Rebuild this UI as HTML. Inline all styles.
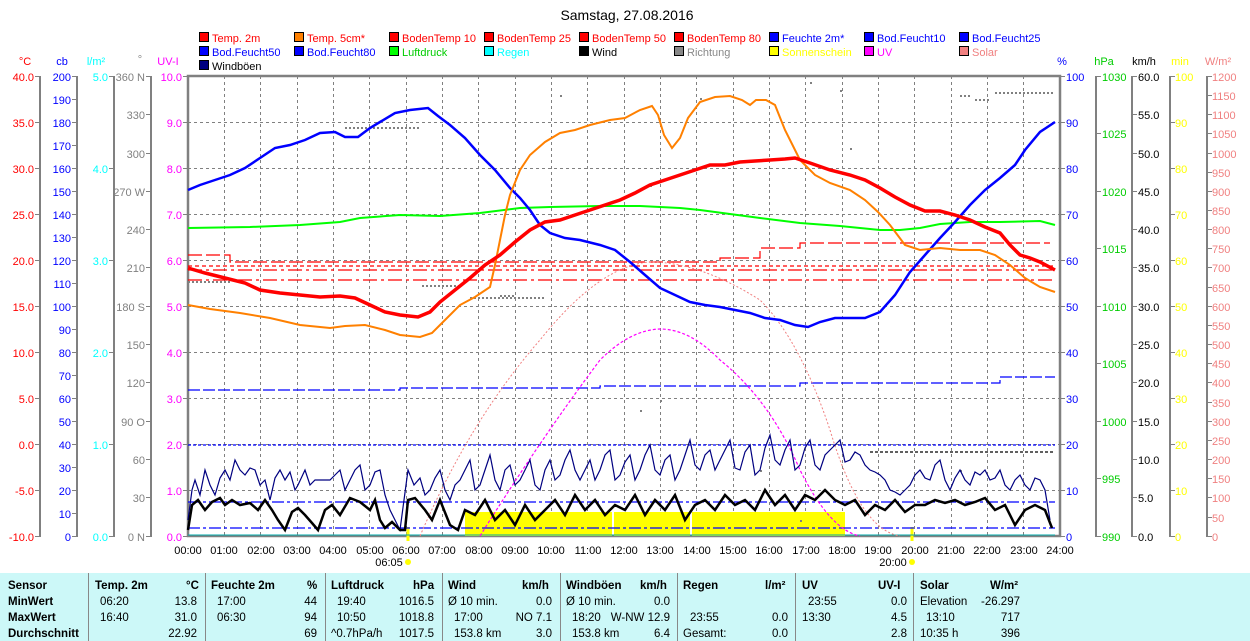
<!DOCTYPE html>
<html><head><meta charset="utf-8"><style>
body{margin:0;background:#fff;width:1250px;height:641px;overflow:hidden;font-family:"Liberation Sans",sans-serif}
svg{position:absolute;left:0;top:0}
text{font-family:"Liberation Sans",sans-serif;font-size:11px}
.tb{position:absolute;left:0;top:573px;width:1250px;height:68px;background:#ccf8f8;font-size:11.5px}
.tb div{position:absolute;white-space:nowrap}
.b{font-weight:bold}
.sep{position:absolute;top:0;width:1px;height:68px;background:#888}
</style></head><body>
<svg width="1250" height="641" viewBox="0 0 1250 641">
<text x="627" y="20" text-anchor="middle" style="font-size:14px">Samstag, 27.08.2016</text>
<g stroke="#000" stroke-width="1">
<rect x="199.5" y="32.5" width="9" height="9" fill="#f00"/><rect x="294.5" y="32.5" width="9" height="9" fill="#ff8000"/><rect x="389.5" y="32.5" width="9" height="9" fill="#f00"/><rect x="484.5" y="32.5" width="9" height="9" fill="#f00"/><rect x="579.5" y="32.5" width="9" height="9" fill="#f00"/><rect x="674.5" y="32.5" width="9" height="9" fill="#f00"/><rect x="769.5" y="32.5" width="9" height="9" fill="#00f"/><rect x="864.5" y="32.5" width="9" height="9" fill="#00f"/><rect x="959.5" y="32.5" width="9" height="9" fill="#00f"/>
<rect x="199.5" y="46.5" width="9" height="9" fill="#00f"/><rect x="294.5" y="46.5" width="9" height="9" fill="#00f"/><rect x="389.5" y="46.5" width="9" height="9" fill="#0f0"/><rect x="484.5" y="46.5" width="9" height="9" fill="#0ff"/><rect x="579.5" y="46.5" width="9" height="9" fill="#000"/><rect x="674.5" y="46.5" width="9" height="9" fill="#888"/><rect x="769.5" y="46.5" width="9" height="9" fill="#ff0"/><rect x="864.5" y="46.5" width="9" height="9" fill="#f0f"/><rect x="959.5" y="46.5" width="9" height="9" fill="#f08080"/>
<rect x="199.5" y="60.5" width="9" height="9" fill="#000080"/>
</g>
<g>
<text x="212" y="42" fill="#f00">Temp. 2m</text><text x="307" y="42" fill="#f00">Temp. 5cm*</text><text x="402" y="42" fill="#f00">BodenTemp 10</text><text x="497" y="42" fill="#f00">BodenTemp 25</text><text x="592" y="42" fill="#f00">BodenTemp 50</text><text x="687" y="42" fill="#f00">BodenTemp 80</text><text x="782" y="42" fill="#00f">Feuchte 2m*</text><text x="877" y="42" fill="#00f">Bod.Feucht10</text><text x="972" y="42" fill="#00f">Bod.Feucht25</text>
<text x="212" y="56" fill="#00f">Bod.Feucht50</text><text x="307" y="56" fill="#00f">Bod.Feucht80</text><text x="402" y="56" fill="#0c0">Luftdruck</text><text x="497" y="56" fill="#0ff">Regen</text><text x="592" y="56" fill="#000">Wind</text><text x="687" y="56" fill="#888">Richtung</text><text x="782" y="56" fill="#ff0">Sonnenschein</text><text x="877" y="56" fill="#f0f">UV</text><text x="972" y="56" fill="#f08080">Solar</text>
<text x="212" y="70" fill="#000">Windböen</text>
</g>
<text x="25" y="65" fill="#f00" text-anchor="middle">°C</text><text x="62" y="65" fill="#00f" text-anchor="middle">cb</text><text x="96" y="65" fill="#0ff" text-anchor="middle">l/m²</text><text x="140" y="63" fill="#888" text-anchor="middle">°</text><text x="168" y="65" fill="#f0f" text-anchor="middle">UV-I</text>
<text x="1062" y="65" fill="#00f" text-anchor="middle">%</text><text x="1104" y="65" fill="#0c0" text-anchor="middle">hPa</text><text x="1144" y="65" fill="#000" text-anchor="middle">km/h</text><text x="1180" y="65" fill="#ff0" text-anchor="middle">min</text><text x="1218" y="65" fill="#f08080" text-anchor="middle">W/m²</text>
<g stroke="#808080" stroke-dasharray="3,3" stroke-width="1">
<path d="M224.5 76V536M260.5 76V536M297.5 76V536M333.5 76V536M369.5 76V536M406.5 76V536M442.5 76V536M478.5 76V536M515.5 76V536M551.5 76V536M587.5 76V536M624.5 76V536M660.5 76V536M696.5 76V536M733.5 76V536M769.5 76V536M805.5 76V536M842.5 76V536M878.5 76V536M914.5 76V536M951.5 76V536M987.5 76V536M1023.5 76V536"/>
<path d="M188 122.5H1060M188 168.5H1060M188 214.5H1060M188 260.5H1060M188 306.5H1060M188 352.5H1060M188 398.5H1060M188 444.5H1060M188 490.5H1060"/>
</g>
<g stroke="#808080" stroke-width="2" fill="none">
<path d="M40 76V537M77 76V537M114 76V537M151 76V537M1096 76V537M1132 76V537M1170 76V537M1207 76V537"/>
<rect x="188" y="76" width="872" height="460" stroke-width="2.5"/>
</g>
<g stroke="#808080" stroke-width="1">
<path d="M35 76.5h5M35 122.5h5M35 168.5h5M35 214.5h5M35 260.5h5M35 306.5h5M35 352.5h5M35 398.5h5M35 444.5h5M35 490.5h5M35 536.5h5"/>
<path d="M72 76.5h5M72 99.5h5M72 122.5h5M72 145.5h5M72 168.5h5M72 191.5h5M72 214.5h5M72 237.5h5M72 260.5h5M72 283.5h5M72 306.5h5M72 329.5h5M72 352.5h5M72 375.5h5M72 398.5h5M72 421.5h5M72 444.5h5M72 467.5h5M72 490.5h5M72 513.5h5M72 536.5h5"/>
<path d="M109 76.5h5M109 168.5h5M109 260.5h5M109 352.5h5M109 444.5h5M109 536.5h5"/>
<path d="M146 76.5h5M146 114.5h5M146 153.5h5M146 191.5h5M146 229.5h5M146 267.5h5M146 306.5h5M146 344.5h5M146 382.5h5M146 421.5h5M146 459.5h5M146 497.5h5M146 536.5h5"/>
<path d="M183 76.5h5M183 122.5h5M183 168.5h5M183 214.5h5M183 260.5h5M183 306.5h5M183 352.5h5M183 398.5h5M183 444.5h5M183 490.5h5M183 536.5h5"/>
<path d="M1060 76.5h5M1060 122.5h5M1060 168.5h5M1060 214.5h5M1060 260.5h5M1060 306.5h5M1060 352.5h5M1060 398.5h5M1060 444.5h5M1060 490.5h5M1060 536.5h5"/>
<path d="M1096 76.5h5M1096 133.5h5M1096 191.5h5M1096 248.5h5M1096 306.5h5M1096 363.5h5M1096 421.5h5M1096 478.5h5M1096 536.5h5"/>
<path d="M1132 76.5h5M1132 114.5h5M1132 153.5h5M1132 191.5h5M1132 229.5h5M1132 267.5h5M1132 306.5h5M1132 344.5h5M1132 382.5h5M1132 421.5h5M1132 459.5h5M1132 497.5h5M1132 536.5h5"/>
<path d="M1170 76.5h5M1170 122.5h5M1170 168.5h5M1170 214.5h5M1170 260.5h5M1170 306.5h5M1170 352.5h5M1170 398.5h5M1170 444.5h5M1170 490.5h5M1170 536.5h5"/>
<path d="M1207 76.5h5M1207 95.5h5M1207 114.5h5M1207 133.5h5M1207 153.5h5M1207 172.5h5M1207 191.5h5M1207 210.5h5M1207 229.5h5M1207 248.5h5M1207 267.5h5M1207 287.5h5M1207 306.5h5M1207 325.5h5M1207 344.5h5M1207 363.5h5M1207 382.5h5M1207 402.5h5M1207 421.5h5M1207 440.5h5M1207 459.5h5M1207 478.5h5M1207 497.5h5M1207 517.5h5M1207 536.5h5"/>
</g>
<g fill="#f00" text-anchor="end"><text x="34" y="81">40.0</text><text x="34" y="127">35.0</text><text x="34" y="173">30.0</text><text x="34" y="219">25.0</text><text x="34" y="265">20.0</text><text x="34" y="311">15.0</text><text x="34" y="357">10.0</text><text x="34" y="403">5.0</text><text x="34" y="449">0.0</text><text x="34" y="495">-5.0</text><text x="34" y="541">-10.0</text></g>
<g fill="#00f" text-anchor="end"><text x="71" y="81">200</text><text x="71" y="104">190</text><text x="71" y="127">180</text><text x="71" y="150">170</text><text x="71" y="173">160</text><text x="71" y="196">150</text><text x="71" y="219">140</text><text x="71" y="242">130</text><text x="71" y="265">120</text><text x="71" y="288">110</text><text x="71" y="311">100</text><text x="71" y="334">90</text><text x="71" y="357">80</text><text x="71" y="380">70</text><text x="71" y="403">60</text><text x="71" y="426">50</text><text x="71" y="449">40</text><text x="71" y="472">30</text><text x="71" y="495">20</text><text x="71" y="518">10</text><text x="71" y="541">0</text></g>
<g fill="#0ff" text-anchor="end"><text x="108" y="81">5.0</text><text x="108" y="173">4.0</text><text x="108" y="265">3.0</text><text x="108" y="357">2.0</text><text x="108" y="449">1.0</text><text x="108" y="541">0.0</text></g>
<g fill="#808080" text-anchor="end"><text x="145" y="81">360 N</text><text x="145" y="119">330</text><text x="145" y="158">300</text><text x="145" y="196">270 W</text><text x="145" y="234">240</text><text x="145" y="272">210</text><text x="145" y="311">180 S</text><text x="145" y="349">150</text><text x="145" y="387">120</text><text x="145" y="426">90 O</text><text x="145" y="464">60</text><text x="145" y="502">30</text><text x="145" y="541">0 N</text></g>
<g fill="#f0f" text-anchor="end"><text x="182" y="81">10.0</text><text x="182" y="127">9.0</text><text x="182" y="173">8.0</text><text x="182" y="219">7.0</text><text x="182" y="265">6.0</text><text x="182" y="311">5.0</text><text x="182" y="357">4.0</text><text x="182" y="403">3.0</text><text x="182" y="449">2.0</text><text x="182" y="495">1.0</text><text x="182" y="541">0.0</text></g>
<g fill="#00f"><text x="1066" y="81">100</text><text x="1066" y="127">90</text><text x="1066" y="173">80</text><text x="1066" y="219">70</text><text x="1066" y="265">60</text><text x="1066" y="311">50</text><text x="1066" y="357">40</text><text x="1066" y="403">30</text><text x="1066" y="449">20</text><text x="1066" y="495">10</text><text x="1066" y="541">0</text></g>
<g fill="#0c0"><text x="1102" y="81">1030</text><text x="1102" y="138">1025</text><text x="1102" y="196">1020</text><text x="1102" y="253">1015</text><text x="1102" y="311">1010</text><text x="1102" y="368">1005</text><text x="1102" y="426">1000</text><text x="1102" y="483">995</text><text x="1102" y="541">990</text></g>
<g fill="#000"><text x="1138" y="81">60.0</text><text x="1138" y="119">55.0</text><text x="1138" y="158">50.0</text><text x="1138" y="196">45.0</text><text x="1138" y="234">40.0</text><text x="1138" y="272">35.0</text><text x="1138" y="311">30.0</text><text x="1138" y="349">25.0</text><text x="1138" y="387">20.0</text><text x="1138" y="426">15.0</text><text x="1138" y="464">10.0</text><text x="1138" y="502">5.0</text><text x="1138" y="541">0.0</text></g>
<g fill="#ff0"><text x="1175" y="81">100</text><text x="1175" y="127">90</text><text x="1175" y="173">80</text><text x="1175" y="219">70</text><text x="1175" y="265">60</text><text x="1175" y="311">50</text><text x="1175" y="357">40</text><text x="1175" y="403">30</text><text x="1175" y="449">20</text><text x="1175" y="495">10</text><text x="1175" y="541">0</text></g>
<g fill="#f08080"><text x="1212" y="81">1200</text><text x="1212" y="100">1150</text><text x="1212" y="119">1100</text><text x="1212" y="138">1050</text><text x="1212" y="158">1000</text><text x="1212" y="177">950</text><text x="1212" y="196">900</text><text x="1212" y="215">850</text><text x="1212" y="234">800</text><text x="1212" y="253">750</text><text x="1212" y="272">700</text><text x="1212" y="292">650</text><text x="1212" y="311">600</text><text x="1212" y="330">550</text><text x="1212" y="349">500</text><text x="1212" y="368">450</text><text x="1212" y="387">400</text><text x="1212" y="407">350</text><text x="1212" y="426">300</text><text x="1212" y="445">250</text><text x="1212" y="464">200</text><text x="1212" y="483">150</text><text x="1212" y="502">100</text><text x="1212" y="522">50</text><text x="1212" y="541">0</text></g>
<g text-anchor="middle" fill="#000"><text x="188" y="554">00:00</text><text x="224" y="554">01:00</text><text x="261" y="554">02:00</text><text x="297" y="554">03:00</text><text x="333" y="554">04:00</text><text x="370" y="554">05:00</text><text x="406" y="554">06:00</text><text x="442" y="554">07:00</text><text x="479" y="554">08:00</text><text x="515" y="554">09:00</text><text x="551" y="554">10:00</text><text x="588" y="554">11:00</text><text x="624" y="554">12:00</text><text x="660" y="554">13:00</text><text x="697" y="554">14:00</text><text x="733" y="554">15:00</text><text x="769" y="554">16:00</text><text x="806" y="554">17:00</text><text x="842" y="554">18:00</text><text x="878" y="554">19:00</text><text x="915" y="554">20:00</text><text x="951" y="554">21:00</text><text x="987" y="554">22:00</text><text x="1024" y="554">23:00</text><text x="1060" y="554">24:00</text>
<text x="389" y="566">06:05</text><text x="893" y="566">20:00</text></g>
<circle cx="408" cy="562" r="3" fill="#ff0"/><circle cx="912" cy="562" r="3" fill="#ff0"/>
<path d="M408 527V541M912 527V541" stroke="#ff0" stroke-width="3"/>
<path d="M465 512H612V536H465Z M614 512H690V536H614Z M692 512H845V536H692Z" fill="#ff0"/>
<g fill="none" stroke-width="1.2">
<path d="M188 390H400V388H600V386H800V383H1000V377H1055" stroke="#00f" stroke-dasharray="12,3"/>
<path d="M188 445H1055" stroke="#00f" stroke-dasharray="3,2"/>
<path d="M870 452H1055" stroke="#000" stroke-dasharray="3,2"/>
<path d="M188 502H1055" stroke="#00f" stroke-dasharray="12,3,3,3"/>
<path d="M188 528H1055" stroke="#00f" stroke-dasharray="12,3,3,3"/>
<path d="M188 255H230V262H720V258H760V248H800V243H1050" stroke="#f00" stroke-dasharray="14,4"/>
<path d="M188 266H1055" stroke="#f00" stroke-dasharray="4,3"/>
<path d="M188 270H1055" stroke="#f00" stroke-dasharray="14,4,3,4"/>
<path d="M188 280H1055" stroke="#f00" stroke-dasharray="14,4,3,4"/>
<path d="M188 535H1055" stroke="#0aa" stroke-width="1"/>
</g>
<g fill="none" stroke="#808080" stroke-width="2" stroke-dasharray="2,2">
<path d="M188 282H232M345 128H420M422 286H462M470 298H545M500 296H515M995 93H1055M960 96H970M975 100H990"/>
</g>
<g fill="#808080"><rect x="560" y="95" width="2" height="2"/><rect x="700" y="98" width="2" height="2"/><rect x="810" y="82" width="2" height="2"/><rect x="840" y="90" width="2" height="2"/><rect x="850" y="148" width="2" height="2"/><rect x="640" y="410" width="2" height="2"/><rect x="660" y="400" width="2" height="2"/><rect x="760" y="470" width="2" height="2"/><rect x="800" y="520" width="2" height="2"/><rect x="960" y="470" width="2" height="2"/><rect x="650" y="185" width="2" height="2"/></g>
<path d="M420 536 Q470 420 540 340 Q600 265 650 262 Q700 262 760 300 Q800 340 830 430 Q860 530 900 536" fill="none" stroke="#f08080" stroke-width="1" stroke-dasharray="2,2"/>
<path d="M480 536 Q540 440 600 360 Q630 330 660 329 Q690 329 720 360 Q770 400 800 470 Q830 530 860 536" fill="none" stroke="#f0f" stroke-width="1.2" stroke-dasharray="3,2"/>
<polyline fill="none" stroke="#0f0" stroke-width="2" points="188,228 250,227 300,225 340,222 360,218 400,215 440,216 480,213 520,208 550,207 600,206 640,206 680,208 700,210 730,214 760,218 800,223 840,226 880,230 900,230 920,228 940,224 970,222 1000,222 1040,221 1055,225"/>
<polyline fill="none" stroke="#00f" stroke-width="2.5" points="188,190 200,185 215,180 230,175 245,168 260,158 275,148 290,145 305,140 320,133 335,132 345,137 358,137 370,128 380,122 395,113 410,110 428,108 438,116 450,125 465,138 480,155 495,170 510,188 520,198 530,210 540,225 550,233 565,238 580,240 600,245 615,250 630,262 645,275 660,288 675,295 690,302 705,305 720,307 735,310 750,313 765,318 780,320 795,325 808,327 820,322 835,318 850,318 865,318 880,312 895,295 910,272 925,255 940,238 955,222 970,205 985,190 1000,178 1015,165 1025,150 1040,132 1055,122"/>
<polyline fill="none" stroke="#ff8000" stroke-width="2" points="188,305 210,309 240,313 270,318 300,325 330,328 345,326 365,325 385,330 400,335 420,337 432,333 445,320 460,305 475,297 490,287 495,265 500,240 505,215 510,195 520,170 530,155 545,142 560,133 575,130 590,125 610,120 625,118 640,110 652,106 658,115 664,135 672,148 680,138 688,118 700,102 715,97 730,96 742,100 750,105 756,100 766,100 775,105 785,130 800,160 815,175 830,183 850,190 865,200 878,212 890,225 905,245 920,250 940,248 960,250 980,250 995,255 1010,265 1025,278 1040,287 1055,292"/>
<polyline fill="none" stroke="#f00" stroke-width="3.5" points="188,268 205,273 225,278 245,283 260,290 280,293 300,295 320,297 340,296 355,298 370,305 385,312 400,315 418,317 430,312 440,302 455,290 470,278 485,265 500,255 515,242 530,230 545,222 560,220 575,215 590,210 605,205 620,200 635,193 650,185 665,180 680,175 695,170 710,165 725,165 740,162 755,161 770,160 785,159 795,158 810,163 830,170 850,175 865,180 880,188 895,197 910,205 925,211 940,211 955,215 970,220 985,227 1000,233 1010,245 1020,255 1030,258 1040,262 1055,270"/>
<polyline fill="none" stroke="#000080" stroke-width="1.2" points="188,520 192,490 195,480 200,495 205,470 210,485 215,495 220,478 225,470 230,480 235,460 240,470 245,475 250,468 255,470 260,485 265,480 270,500 275,478 280,470 285,480 290,472 295,490 298,485 305,470 310,485 315,480 330,480 335,475 340,470 345,490 350,480 355,470 360,465 365,490 370,485 375,472 380,470 385,495 390,510 395,520 400,530 404,500 408,470 414,485 420,478 425,495 430,490 435,478 440,470 445,490 450,500 455,485 460,480 465,470 470,460 475,490 480,485 485,470 490,455 495,480 500,490 505,470 510,465 515,485 520,480 525,470 530,460 535,485 540,490 545,470 550,460 555,480 560,475 565,460 570,450 575,470 580,480 585,470 590,460 595,480 600,470 605,455 610,450 615,480 620,475 625,462 630,455 635,480 640,470 645,455 650,445 655,470 660,475 665,460 670,455 675,480 680,470 685,455 690,440 695,465 700,470 705,455 710,450 715,470 720,460 725,450 730,440 735,468 740,470 745,452 750,445 755,475 760,470 765,448 770,435 775,460 780,465 785,450 790,440 795,470 800,465 805,448 810,440 815,465 820,470 825,455 830,450 835,445 840,440 845,462 850,460 855,452 860,455 865,465 870,470 875,472 880,475 885,480 890,490 895,492 900,495 905,490 910,485 915,475 920,470 925,478 930,480 935,465 940,460 945,480 950,490 955,478 960,470 965,480 970,485 975,472 980,475 985,470 990,480 995,478 1000,470 1005,485 1010,490 1015,480 1020,475 1025,485 1030,490 1035,478 1040,480 1045,490 1050,520"/>
<polyline fill="none" stroke="#000" stroke-width="2.5" points="188,530 192,505 198,500 205,510 212,502 220,498 225,505 232,500 240,505 250,503 258,510 265,500 272,510 278,520 285,530 292,512 298,508 305,515 312,523 318,530 325,510 332,505 340,515 350,498 360,502 370,510 375,500 380,520 385,528 392,522 400,530 405,530 408,500 415,498 425,510 432,520 440,500 450,525 458,530 465,510 475,515 485,500 495,520 505,510 515,525 525,505 535,520 545,510 555,500 565,515 575,495 585,510 595,500 605,515 615,505 625,510 635,495 645,515 655,500 665,510 675,495 685,520 695,505 705,500 715,510 725,495 735,505 745,500 755,510 765,490 775,505 785,495 795,510 805,495 815,500 825,490 835,500 845,505 855,500 865,515 875,505 885,510 895,500 905,512 915,505 925,505 935,500 945,503 955,500 965,505 975,502 985,498 995,510 1005,505 1015,525 1025,510 1035,505 1045,510 1052,528"/>
</svg>
<div class="tb">
<div class="sep" style="left:88px"></div><div class="sep" style="left:205px"></div><div class="sep" style="left:325px"></div><div class="sep" style="left:442px"></div><div class="sep" style="left:560px"></div><div class="sep" style="left:677px"></div><div class="sep" style="left:795px"></div><div class="sep" style="left:913px"></div>
<div class="b" style="left:8px;top:7px">Sensor</div><div class="b" style="left:8px;top:23px">MinWert</div><div class="b" style="left:8px;top:39px">MaxWert</div><div class="b" style="left:8px;top:55px">Durchschnitt</div>
<div class="b" style="left:95px;top:7px">Temp. 2m</div><div class="b" style="left:186px;top:7px">°C</div>
<div style="left:100px;top:23px">06:20</div><div style="right:1053px;top:23px">13.8</div>
<div style="left:100px;top:39px">16:40</div><div style="right:1053px;top:39px">31.0</div>
<div style="right:1053px;top:55px">22.92</div>
<div class="b" style="left:211px;top:7px">Feuchte 2m</div><div class="b" style="left:307px;top:7px">%</div>
<div style="left:217px;top:23px">17:00</div><div style="right:933px;top:23px">44</div>
<div style="left:217px;top:39px">06:30</div><div style="right:933px;top:39px">94</div>
<div style="right:933px;top:55px">69</div>
<div class="b" style="left:331px;top:7px">Luftdruck</div><div class="b" style="left:413px;top:7px">hPa</div>
<div style="left:337px;top:23px">19:40</div><div style="right:816px;top:23px">1016.5</div>
<div style="left:337px;top:39px">10:50</div><div style="right:816px;top:39px">1018.8</div>
<div style="left:331px;top:55px">^0.7hPa/h</div><div style="right:816px;top:55px">1017.5</div>
<div class="b" style="left:448px;top:7px">Wind</div><div class="b" style="left:522px;top:7px">km/h</div>
<div style="left:448px;top:23px">Ø 10 min.</div><div style="right:698px;top:23px">0.0</div>
<div style="left:454px;top:39px">17:00</div><div style="right:698px;top:39px">NO 7.1</div>
<div style="left:454px;top:55px">153.8 km</div><div style="right:698px;top:55px">3.0</div>
<div class="b" style="left:566px;top:7px">Windböen</div><div class="b" style="left:640px;top:7px">km/h</div>
<div style="left:566px;top:23px">Ø 10 min.</div><div style="right:580px;top:23px">0.0</div>
<div style="left:572px;top:39px">18:20</div><div style="right:580px;top:39px">W-NW 12.9</div>
<div style="left:572px;top:55px">153.8 km</div><div style="right:580px;top:55px">6.4</div>
<div class="b" style="left:683px;top:7px">Regen</div><div class="b" style="left:765px;top:7px">l/m²</div>
<div style="left:690px;top:39px">23:55</div><div style="right:462px;top:39px">0.0</div>
<div style="left:683px;top:55px">Gesamt:</div><div style="right:462px;top:55px">0.0</div>
<div class="b" style="left:802px;top:7px">UV</div><div class="b" style="left:878px;top:7px">UV-I</div>
<div style="left:808px;top:23px">23:55</div><div style="right:343px;top:23px">0.0</div>
<div style="left:802px;top:39px">13:30</div><div style="right:343px;top:39px">4.5</div>
<div style="right:343px;top:55px">2.8</div>
<div class="b" style="left:920px;top:7px">Solar</div><div class="b" style="left:990px;top:7px">W/m²</div>
<div style="left:920px;top:23px">Elevation</div><div style="right:230px;top:23px">-26.297</div>
<div style="left:926px;top:39px">13:10</div><div style="right:230px;top:39px">717</div>
<div style="left:920px;top:55px">10:35 h</div><div style="right:230px;top:55px">396</div>
</div>
</body></html>
